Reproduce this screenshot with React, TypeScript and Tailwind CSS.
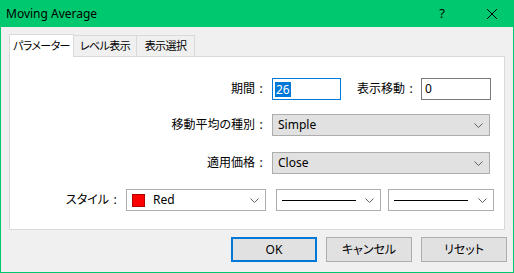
import React from "react";

const font = { fontFamily: '"Noto Sans", "Noto Sans CJK JP", sans-serif', fontFeatureSettings: '"palt"' };

function Chevron() {
  return (
    <svg width="9" height="5" viewBox="0 0 9 5" className="shrink-0">
      <polyline points="0.5,0.5 4.5,4.5 8.5,0.5" fill="none" stroke="#606060" strokeWidth="1" />
    </svg>
  );
}

function Label({ text, className }: { text: string; className: string }) {
  return (
    <div className={`flex items-center justify-end ${className}`}>
      {text}
      <span className="inline-block w-[12px] text-center">:</span>
    </div>
  );
}

function Select({ className, children }: { className: string; children: React.ReactNode }) {
  return (
    <div className={`flex h-[22px] items-center justify-between border border-[#adadad] pl-[5px] pr-[6px] ${className}`}>
      <div className="flex items-center">{children}</div>
      <Chevron />
    </div>
  );
}

function Line() {
  return <div className="h-px w-[74px] bg-black" />;
}

function Button({ label, primary }: { label: string; primary?: boolean }) {
  return (
    <div
      className={`flex h-[25px] w-[86px] items-center justify-center bg-[#e1e1e1] text-[12px] text-black ${
        primary ? "border-2 border-[#0078d7]" : "border border-[#adadad]"
      }`}
    >
      {label}
    </div>
  );
}

export default function App() {
  return (
    <div
      className="flex h-[273px] w-[514px] flex-col whitespace-nowrap border border-t-0 border-[#00c86e] bg-[#f0f0f0] text-[12px] text-black"
      style={font}
    >
      {/* title bar */}
      <div className="-mx-px flex h-[27px] shrink-0 items-center bg-[#00c86e] pl-[6px]">
        <span className="text-[12px]">Moving Average</span>
        <span className="ml-auto w-[20px] text-center text-[13px]">?</span>
        <svg width="12" height="12" viewBox="0 0 12 12" className="ml-[34px] mr-[16px]">
          <path d="M1 1 L11 11 M11 1 L1 11" stroke="#000" strokeWidth="1" />
        </svg>
      </div>

      {/* tabs */}
      <div className="ml-[8px] mt-[6px] flex h-[23px] items-end text-[11px] tracking-[-0.6px]">
        <div className="relative z-10 -mb-px flex h-[23px] w-[65px] items-center justify-center border border-b-0 border-[#d9d9d9] bg-white">
          パラメーター
        </div>
        <div className="flex h-[21px] w-[63px] items-center justify-center border border-b-0 border-l-0 border-[#d9d9d9] bg-[#f0f0f0]">
          レベル表示
        </div>
        <div className="flex h-[21px] w-[58px] items-center justify-center border border-b-0 border-l-0 border-[#d9d9d9] bg-[#f0f0f0]">
          表示選択
        </div>
      </div>

      {/* panel */}
      <div className="ml-[8px] flex h-[174px] w-[496px] flex-col border border-[#d9d9d9] bg-white pt-[21px]">
        <div className="flex h-[22px] items-center">
          <Label text="期間" className="w-[262px] pr-[5px]" />
          <div className="flex h-[22px] w-[69px] items-center border border-[#0078d7] pl-[2px]">
            <span className="bg-[#0078d7] px-px leading-[15px] text-white">26</span>
          </div>
          <Label text="表示移動" className="ml-[16px] w-[64px] justify-start" />
          <div className="flex h-[22px] w-[70px] items-center border border-[#7a7a7a] pl-[3px]">0</div>
        </div>

        <div className="mt-[14px] flex h-[22px] items-center">
          <Label text="移動平均の種別" className="w-[262px] pr-[5px]" />
          <Select className="w-[218px] bg-[#e1e1e1]">Simple</Select>
        </div>

        <div className="mt-[16px] flex h-[22px] items-center">
          <Label text="適用価格" className="w-[262px] pr-[5px]" />
          <Select className="w-[218px] bg-[#e1e1e1]">Close</Select>
        </div>

        <div className="mt-[15px] flex h-[22px] items-center">
          <Label text="スタイル" className="w-[116px] pr-[5px]" />
          <Select className="w-[140px] border-[#7a7a7a] bg-white pl-[3px]">
            <div className="h-[13px] w-[13px] border border-[#b00000] bg-[#ff0000]" />
            <span className="ml-[8px]">Red</span>
          </Select>
          <Select className="ml-[10px] w-[105px] border-[#7a7a7a] bg-white">
            <Line />
          </Select>
          <Select className="ml-[7px] w-[106px] border-[#7a7a7a] bg-white">
            <Line />
          </Select>
        </div>
      </div>

      {/* buttons */}
      <div className="mt-[7px] flex gap-[9px] pl-[230px]">
        <Button label="OK" primary />
        <Button label="キャンセル" />
        <Button label="リセット" />
      </div>
    </div>
  );
}
